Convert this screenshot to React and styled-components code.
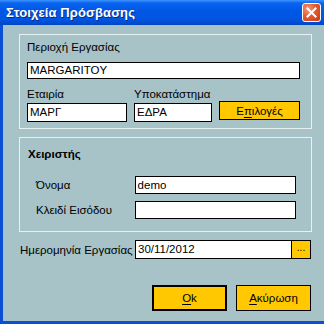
import React from "react";
import styled, { createGlobalStyle } from "styled-components";

const Global = createGlobalStyle`
  html, body {
    margin: 0;
    padding: 0;
    background: #3a6ea5;
  }
  body {
    font-family: "Liberation Sans", "DejaVu Sans", sans-serif;
  }
`;

const Window = styled.div`
  width: 324px;
  height: 324px;
  display: flex;
  flex-direction: column;
  overflow: hidden;
`;

const TitleBar = styled.div`
  height: 25px;
  flex: none;
  display: flex;
  align-items: center;
  justify-content: space-between;
  padding: 0 3px 0 6px;
  background: linear-gradient(
    180deg,
    #3d95ff 0%,
    #0a64f0 12%,
    #0058e6 40%,
    #0054e0 80%,
    #0046c4 100%
  );
`;

const Title = styled.span`
  color: #fff;
  font-family: "Liberation Sans", sans-serif;
  font-weight: bold;
  font-size: 13px;
  letter-spacing: 0.1px;
  text-shadow: 1px 1px 0 #0a2a80;
`;

const CloseButton = styled.div`
  width: 19px;
  height: 19px;
  border: 1px solid #fff;
  border-radius: 3px;
  box-sizing: border-box;
  background: radial-gradient(circle at 30% 30%, #f59a7c 0%, #e55a2d 45%, #c43a14 100%);
  display: flex;
  align-items: center;
  justify-content: center;
`;

const Body = styled.div`
  flex: 1;
  background: #a7c3c7;
  border-left: 3px solid #0a4fd6;
  border-bottom: 3px solid #0a4fd6;
  padding: 9px 12px 0 16px;
  display: flex;
  flex-direction: column;
  font-size: 11px;
  color: #000;
`;

const Panel = styled.div`
  border: 1px solid #e6f2f2;
  height: ${(p) => p.h}px;
  box-sizing: border-box;
  padding: ${(p) => p.pad};
  margin-bottom: 8px;
  display: flex;
  flex-direction: column;
`;

const Label = styled.div`
  font-size: 11.5px;
  line-height: 13px;
  height: 13px;
  margin-bottom: ${(p) => p.mb || 0}px;
  white-space: nowrap;
`;

const Input = styled.div`
  box-sizing: border-box;
  width: ${(p) => p.w}px;
  height: ${(p) => p.h || 18}px;
  background: #fff;
  border: 1px solid #000;
  font-size: 11.5px;
  line-height: ${(p) => (p.h || 18) - 2}px;
  padding-left: 2px;
  white-space: nowrap;
`;

const Row = styled.div`
  display: flex;
  align-items: flex-start;
  margin-top: ${(p) => p.mt || 0}px;
`;

const Field = styled.div`
  display: flex;
  flex-direction: column;
  width: ${(p) => p.w}px;
`;

const Button = styled.div`
  box-sizing: border-box;
  width: ${(p) => p.w}px;
  height: ${(p) => p.h}px;
  background: #ffc800;
  border: ${(p) => (p.primary ? 2 : 1)}px solid #000;
  display: flex;
  align-items: center;
  justify-content: center;
  font-size: 11.5px;
  margin-top: ${(p) => p.mt || 0}px;

  u {
    text-decoration: underline;
    text-underline-offset: 2px;
  }
`;

const SectionTitle = styled.div`
  font-weight: bold;
  font-size: 11.5px;
  line-height: 13px;
  margin-bottom: 15px;
`;

const FormRow = styled.div`
  display: flex;
  align-items: center;
  margin-bottom: ${(p) => p.mb || 0}px;
`;

const RowLabel = styled.div`
  width: ${(p) => p.w}px;
  padding-left: ${(p) => p.indent || 0}px;
  box-sizing: border-box;
  font-size: 11.5px;
  white-space: nowrap;
`;

const DateButton = styled.div`
  box-sizing: border-box;
  width: 19px;
  height: 19px;
  background: #ffc800;
  border: 1px solid #000;
  border-left: none;
  font-size: 10px;
  line-height: 14px;
  text-align: center;
`;

const Footer = styled.div`
  display: flex;
  justify-content: flex-end;
  gap: 9px;
  margin-top: 26px;
  padding-right: 1px;
`;

export default function App() {
  return (
    <Window>
      <Global />
      <TitleBar>
        <Title>Στοιχεία Πρόσβασης</Title>
        <CloseButton>
          <svg width="11" height="11" viewBox="0 0 11 11">
            <path d="M1.5 1.5 L9.5 9.5 M9.5 1.5 L1.5 9.5" stroke="#fff" strokeWidth="2" strokeLinecap="square" />
          </svg>
        </CloseButton>
      </TitleBar>
      <Body>
        <Panel h={95} pad="6px 11px 0 7px">
          <Label mb={8}>Περιοχή Εργασίας</Label>
          <Input w={273} h={17}>MARGARITOY</Input>
          <Row mt={9}>
            <Field w={107}>
              <Label mb={2}>Εταιρία</Label>
              <Input w={100} h={19}>ΜΑΡΓ</Input>
            </Field>
            <Field w={85}>
              <Label mb={2}>Υποκατάστημα</Label>
              <Input w={78} h={19}>ΕΔΡΑ</Input>
            </Field>
            <Button w={81} h={19} mt={13}>
              Ε<u>π</u>ιλογές
            </Button>
          </Row>
        </Panel>
        <Panel h={95} pad="10px 15px 0 8px">
          <SectionTitle>Χειριστής</SectionTitle>
          <FormRow mb={7}>
            <RowLabel w={107} indent={8}>Όνομα</RowLabel>
            <Input w={162} h={18}>demo</Input>
          </FormRow>
          <FormRow>
            <RowLabel w={107} indent={8}>Κλειδί Εισόδου</RowLabel>
            <Input w={162} h={18} />
          </FormRow>
        </Panel>
        <FormRow>
          <RowLabel w={116} indent={1}>Ημερομηνία Εργασίας</RowLabel>
          <Input w={157} h={19}>30/11/2012</Input>
          <DateButton>...</DateButton>
        </FormRow>
        <Footer>
          <Button w={75} h={26} primary>
            <u>O</u>k
          </Button>
          <Button w={75} h={26}>
            <u>Α</u>κύρωση
          </Button>
        </Footer>
      </Body>
    </Window>
  );
}
